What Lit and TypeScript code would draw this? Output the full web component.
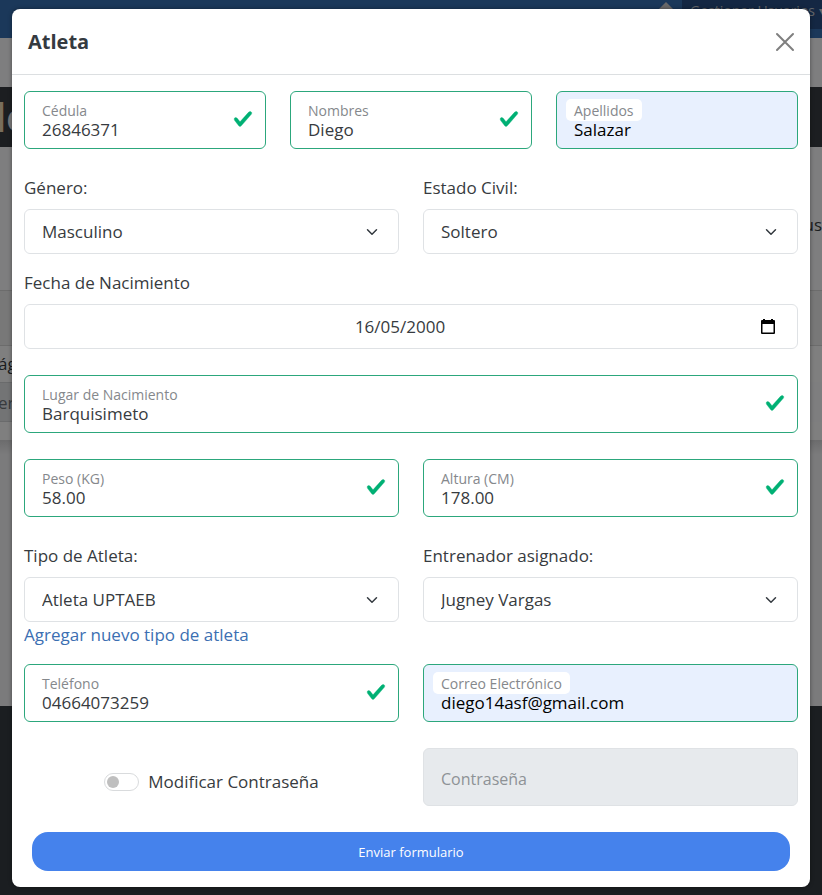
import { LitElement, html, css, svg, nothing } from "lit";
import { customElement, property } from "lit/decorators.js";
import { classMap } from "lit/directives/class-map.js";

const fontStack = css`"Open Sans", "Noto Sans", sans-serif`;

const checkIcon = svg`<svg class="check" viewBox="0 0 8 8" aria-hidden="true">
  <path fill="#00b074" stroke="#00b074" stroke-width=".15" d="M2.3 6.73.6 4.53c-.4-1.04.46-1.4 1.1-.8l1.1 1.4 3.4-3.8c.6-.63 1.6-.27 1.2.7l-4 4.6c-.43.5-.8.4-1.1.1z"/>
</svg>`;

@customElement("floating-field")
export class FloatingField extends LitElement {
  @property() label = "";
  @property() value = "";
  @property() type = "text";
  @property({ type: Boolean }) valid = false;
  @property({ type: Boolean }) autofilled = false;
  @property({ type: Boolean }) disabled = false;

  static styles = css`
    :host { display: block; min-width: 0; }
    * { box-sizing: border-box; }
    .field { position: relative; height: 58px; }
    .control {
      display: block; width: 100%; height: 58px; margin: 0;
      padding: 18px 48px 0 17px;
      border: 1px solid #dfe2e5; border-radius: 6px; background: #fff;
      font: 17px/24px ${fontStack}; color: #373b40; outline: none;
    }
    .valid .control { border-color: #2ca77c; }
    .autofilled .control { background: #e8f0fe; color: #000; }
    .control:disabled { background: #e7eaed; opacity: 1; }
    .label {
      position: absolute; top: 8px; left: 10px; padding: 0 8px;
      height: 22px; border-radius: 5px; background: #fff;
      font: 14px/24px ${fontStack}; color: #85888c; white-space: nowrap;
    }
    .disabled .label {
      top: 19px; background: transparent; font-size: 16px; color: #8e9296;
    }
    .check { position: absolute; right: 13px; top: 18px; width: 20px; height: 20px; }
  `;

  render() {
    const classes = {
      field: true,
      valid: this.valid,
      autofilled: this.autofilled,
      disabled: this.disabled,
    };
    return html`<div class=${classMap(classes)}>
      <input class="control" id="control" type=${this.type} .value=${this.value} ?disabled=${this.disabled} />
      <label class="label" for="control">${this.label}</label>
      ${this.valid && !this.autofilled ? checkIcon : nothing}
    </div>`;
  }
}

@customElement("select-field")
export class SelectField extends LitElement {
  @property() label = "";
  @property({ type: Array }) options: string[] = [];

  static styles = css`
    :host { display: block; min-width: 0; }
    * { box-sizing: border-box; }
    .label { display: block; margin-bottom: 8px; font: 17px/26px ${fontStack}; color: #373b40; }
    .wrap { display: grid; align-items: center; }
    .control, .chevron { grid-area: 1 / 1; }
    .control {
      appearance: none; width: 100%; height: 45px; margin: 0; padding: 0 48px 0 17px;
      border: 1px solid #dfe2e5; border-radius: 6px; background: #fff;
      font: 17px/24px ${fontStack}; color: #373b40; outline: none;
    }
    .chevron { justify-self: end; width: 12px; height: 12px; margin-right: 21px; pointer-events: none; }
  `;

  render() {
    return html`<label class="label" for="control">${this.label}</label>
      <div class="wrap">
        <select class="control" id="control">
          ${this.options.map((o) => html`<option>${o}</option>`)}
        </select>
        <svg class="chevron" viewBox="0 0 16 16" aria-hidden="true">
          <path d="m2 5 6 6 6-6" fill="none" stroke="#343a40" stroke-width="2" stroke-linecap="round" stroke-linejoin="round"/>
        </svg>
      </div>`;
  }
}

@customElement("app-root")
export class AppRoot extends LitElement {
  static styles = css`
    :host {
      display: grid; min-height: 100vh; overflow: hidden;
      font: 17px/26px ${fontStack}; color: #373b40;
    }
    * { box-sizing: border-box; }
    .page, .backdrop { grid-area: 1 / 1; min-width: 0; }

    .page { display: flex; flex-direction: column; background: #fdfdff; }
    .nav {
      display: flex; justify-content: flex-end; align-items: flex-start; gap: 8px;
      height: 38px; overflow: hidden; background: #3671b5;
    }
    .home { width: 16px; height: 16px; margin-top: 2px; }
    .menu {
      width: 140px; height: 29px; padding-left: 8px; background: #284f86;
      font-size: 14px; line-height: 22px; color: #c8ccd4; white-space: nowrap;
    }
    .gap { height: 49px; }
    .banner {
      height: 60px; background: #383d42; color: #f3f0f0; overflow: hidden;
      font-size: 40px; line-height: 60px; font-weight: 700; text-indent: -6px;
    }
    .lead { color: #f0dcb8; }
    .intro {
      display: flex; justify-content: flex-end; align-items: center;
      height: 143px; padding-top: 12px; background: #fdfdff;
    }
    .strip { height: 56px; background: #f0f0f0; border: 1px solid #d8d8d8; border-width: 1px 0; }
    .tools { height: 36px; background: #fff; line-height: 36px; text-indent: -2px; }
    .head {
      width: 100px; height: 40px; background: #e6e8ea; border: 1px solid #d4d6d8; border-width: 1px 0;
      line-height: 40px; text-indent: -2px; color: #70757a;
    }
    .rest { height: 18px; background: #fff; }
    .space { height: 266px; background: linear-gradient(#d8d8da, #f6f6f8 14px); }
    .footer { flex: 1; background: #363c42; }

    .backdrop { position: relative; padding: 9px 12px 8px; background: rgb(0 0 0 / 50%); }
    .modal { overflow: hidden; border-radius: 8px; background: #fff; box-shadow: 0 0 4px rgb(0 0 0 / 40%); }
    .header {
      display: flex; justify-content: space-between; align-items: center;
      height: 66px; padding: 0 15px 0 16px; border-bottom: 1px solid #dcdfe1;
    }
    .title { margin: 0; font-size: 20px; line-height: 30px; font-weight: 700; color: #343a40; }
    .close { display: flex; padding: 0; border: 0; background: none; }
    .close-icon { width: 20px; height: 20px; }

    .form { display: flex; flex-direction: column; gap: 26px; padding: 16px 12px; }
    .group { display: flex; flex-direction: column; gap: 16px; }
    .row { display: grid; grid-template-columns: repeat(2, minmax(0, 1fr)); gap: 24px; }
    .three { grid-template-columns: repeat(3, minmax(0, 1fr)); }

    .date-label { display: block; margin-bottom: 8px; }
    .date-wrap { display: grid; align-items: center; }
    .date, .calendar { grid-area: 1 / 1; }
    .date {
      width: 100%; height: 45px; margin: 0; padding: 0 39px 0 17px; text-align: center;
      border: 1px solid #dfe2e5; border-radius: 6px; background: #fff;
      font: 17px/24px ${fontStack}; color: #373b40; outline: none;
    }
    .calendar { justify-self: end; width: 16px; height: 16px; margin-right: 22px; }

    .link { color: #3c6fb2; text-decoration: none; }
    .switch { display: flex; justify-content: center; align-items: center; gap: 9px; padding-top: 10px; }
    .toggle {
      appearance: none; display: flex; align-items: center; width: 35px; height: 18px; margin: 0; padding: 0 2px;
      border: 1px solid #d9dbdd; border-radius: 9px; background: #fff;
    }
    .toggle::before { content: ""; width: 12px; height: 12px; border-radius: 50%; background: #bfbfbf; }
    .toggle:checked { justify-content: flex-end; background: #4582ec; }
    .submit {
      height: 39px; margin: 0 8px; border: 0; border-radius: 16px; background: #4582ec;
      font: 500 13px/20px ${fontStack}; color: #fff;
    }
  `;

  private preventSubmit(event: Event) {
    event.preventDefault();
  }

  render() {
    return html`
      <div class="page" inert>
        <div class="nav">
          <svg class="home" viewBox="0 0 16 16" aria-hidden="true"><path d="M8 0 16 8H14V16H2V8H0Z" fill="#d5d2d2"/></svg>
          <div class="menu">Gestionar Usuarios ▾</div>
        </div>
        <div class="gap"></div>
        <div class="banner"><span class="lead">l</span>e</div>
        <div class="intro">us</div>
        <div class="strip"></div>
        <div class="tools">ág</div>
        <div class="head">er</div>
        <div class="rest"></div>
        <div class="space"></div>
        <div class="footer"></div>
      </div>
      <div class="backdrop">
        <section class="modal" role="dialog" aria-labelledby="title">
          <header class="header">
            <h1 class="title" id="title">Atleta</h1>
            <button class="close" type="button" aria-label="Cerrar">
              <svg class="close-icon" viewBox="0 0 20 20" aria-hidden="true">
                <path d="m2 2 16 16M18 2 2 18" fill="none" stroke="#7f7f7f" stroke-width="2" stroke-linecap="round"/>
              </svg>
            </button>
          </header>
          <form class="form" @submit=${this.preventSubmit}>
            <div class="row three">
              <floating-field label="Cédula" value="26846371" valid></floating-field>
              <floating-field label="Nombres" value="Diego" valid></floating-field>
              <floating-field label="Apellidos" value="Salazar" valid autofilled></floating-field>
            </div>
            <div class="group">
              <div class="row">
                <select-field label="Género:" .options=${["Masculino", "Femenino"]}></select-field>
                <select-field label="Estado Civil:" .options=${["Soltero", "Casado"]}></select-field>
              </div>
              <div>
                <label class="date-label" for="birth">Fecha de Nacimiento</label>
                <div class="date-wrap">
                  <input class="date" id="birth" type="text" inputmode="numeric" .value=${"16/05/2000"} />
                  <svg class="calendar" viewBox="0 0 16 16" aria-hidden="true">
                    <path d="M3 0h2v1h6V0h2v1h1a1 1 0 0 1 1 1v12a1 1 0 0 1-1 1H2a1 1 0 0 1-1-1V2a1 1 0 0 1 1-1h1zM2.500 5v8.500h11V5z" fill="#000" fill-rule="evenodd"/>
                  </svg>
                </div>
              </div>
            </div>
            <floating-field label="Lugar de Nacimiento" value="Barquisimeto" valid></floating-field>
            <div class="row">
              <floating-field label="Peso (KG)" value="58.00" valid></floating-field>
              <floating-field label="Altura (CM)" value="178.00" valid></floating-field>
            </div>
            <div class="group">
              <div class="row">
                <div>
                  <select-field label="Tipo de Atleta:" .options=${["Atleta UPTAEB"]}></select-field>
                  <a class="link" href="#tipo">Agregar nuevo tipo de atleta</a>
                </div>
                <select-field label="Entrenador asignado:" .options=${["Jugney Vargas"]}></select-field>
              </div>
              <div class="row">
                <floating-field label="Teléfono" value="04664073259" type="tel" valid></floating-field>
                <floating-field label="Correo Electrónico" value="diego14asf@gmail.com" type="email" valid autofilled></floating-field>
              </div>
            </div>
            <div class="row">
              <div class="switch">
                <input class="toggle" id="change" type="checkbox" role="switch" />
                <label for="change">Modificar Contraseña</label>
              </div>
              <floating-field label="Contraseña" type="password" disabled></floating-field>
            </div>
            <button class="submit" type="submit">Enviar formulario</button>
          </form>
        </section>
      </div>
    `;
  }
}
